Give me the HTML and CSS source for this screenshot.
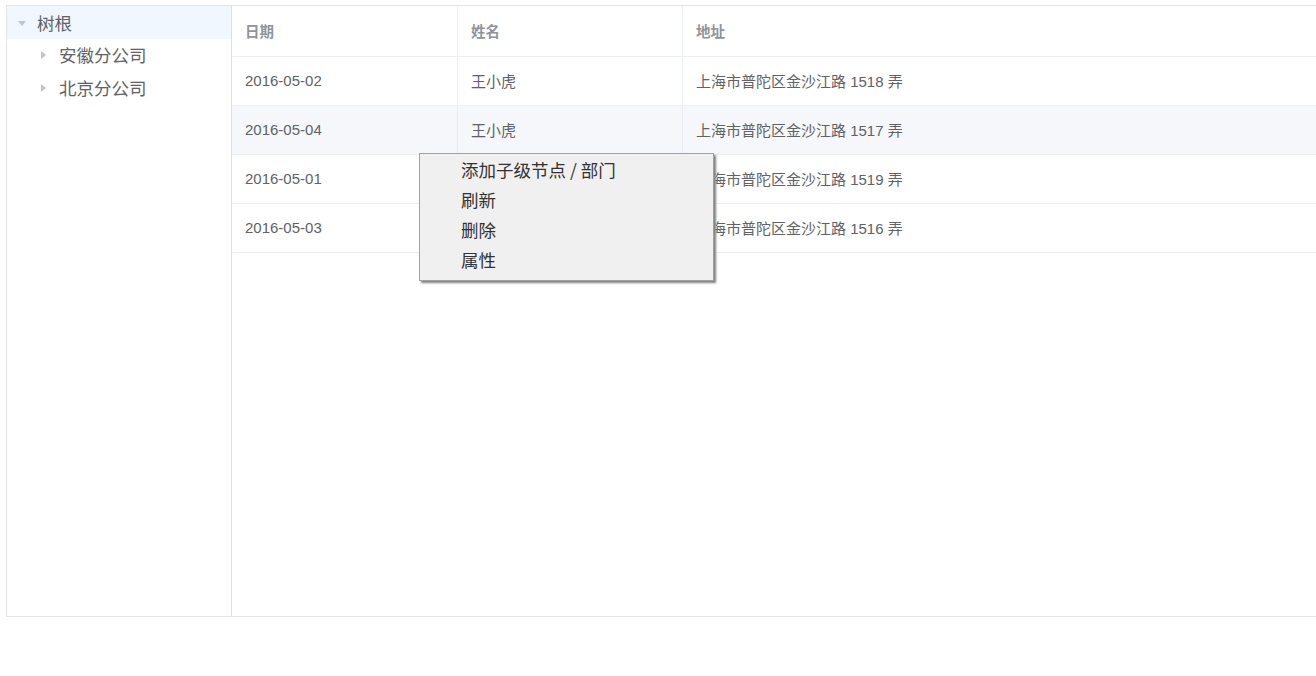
FILE: index.html
```html
<!DOCTYPE html>
<html lang="zh-CN">

<head>
    <meta charset="UTF-8">
    <title>部门管理</title>
    <link rel="stylesheet" href="styles.css">
</head>

<body>
    <div class="layout">
        <!-- left: department tree -->
        <div class="tree">
            <div class="tree-node is-current">
                <span class="caret caret-down"></span>
                <span class="tree-label">树根</span>
            </div>
            <div class="tree-node child">
                <span class="caret caret-right"></span>
                <span class="tree-label">安徽分公司</span>
            </div>
            <div class="tree-node child">
                <span class="caret caret-right"></span>
                <span class="tree-label">北京分公司</span>
            </div>
        </div>

        <!-- right: staff table -->
        <div class="table-wrap">
            <table class="data-table">
                <thead>
                    <tr>
                        <th class="col-date">日期</th>
                        <th class="col-name">姓名</th>
                        <th>地址</th>
                    </tr>
                </thead>
                <tbody>
                    <tr>
                        <td>2016-05-02</td>
                        <td>王小虎</td>
                        <td>上海市普陀区金沙江路 1518 弄</td>
                    </tr>
                    <tr class="hover-row">
                        <td>2016-05-04</td>
                        <td>王小虎</td>
                        <td>上海市普陀区金沙江路 1517 弄</td>
                    </tr>
                    <tr>
                        <td>2016-05-01</td>
                        <td>王小虎</td>
                        <td>上海市普陀区金沙江路 1519 弄</td>
                    </tr>
                    <tr>
                        <td>2016-05-03</td>
                        <td>王小虎</td>
                        <td>上海市普陀区金沙江路 1516 弄</td>
                    </tr>
                </tbody>
            </table>
        </div>
    </div>

    <!-- right click menu -->
    <ul class="context-menu">
        <li>添加子级节点 / 部门</li>
        <li>刷新</li>
        <li>删除</li>
        <li>属性</li>
    </ul>
</body>

</html>
```

FILE: styles.css
```css
/* Reset */
html,
body {
    margin: 0;
    padding: 0;
    overflow: hidden;
    background: #fff;
}

body {
    font-family: "Liberation Sans", "Noto Sans CJK SC", sans-serif;
    color: #606266;
}

/* Outer frame */
.layout {
    display: flex;
    margin: 5px 0 0 6px;
    width: 1360px;
    height: 610px;
    border: 1px solid #e4e4e4;
}

/* Tree panel */
.tree {
    width: 224px;
    flex-shrink: 0;
    border-right: 1px solid #dcdfe6;
    font-family: "Noto Sans CJK SC", sans-serif;
}

.tree-node {
    display: flex;
    align-items: center;
    height: 33px;
    padding-left: 2px;
    font-size: 17.5px;
    color: #606266;
}

.tree-node.child {
    padding-left: 24px;
    margin-top: -1px;
    margin-bottom: 1px;
}

.tree-node.is-current {
    background-color: #f0f7ff;
}

.caret {
    width: 24px;
    height: 12px;
    position: relative;
    flex-shrink: 0;
}

.caret::after {
    content: "";
    position: absolute;
    left: 9px;
    top: 2px;
    border: 4px solid transparent;
}

.caret-down::after {
    top: 4px;
    border-top: 5px solid #c0c4cc;
    border-bottom: 0;
}

.caret-right::after {
    left: 10px;
    border-left: 5px solid #c0c4cc;
    border-right: 0;
}

.tree-label {
    margin-left: 4px;
    line-height: 1;
}

/* Table */
.table-wrap {
    flex: 1;
    background: #fff;
}

.data-table {
    border-collapse: collapse;
    width: 100%;
    font-size: 15px;
    table-layout: fixed;
}

.data-table th,
.data-table td {
    text-align: left;
    vertical-align: middle;
    padding: 0 0 2px 13px;
    border-bottom: 1px solid #ebeef5;
    border-right: 1px solid #ebeef5;
    white-space: nowrap;
}

.data-table th {
    height: 48px;
    color: #909399;
    font-weight: bold;
    font-family: "Noto Sans CJK SC", sans-serif;
    font-size: 14.5px;
}

.data-table td {
    height: 46px;
}

.col-date {
    width: 212px;
}

.col-name {
    width: 211px;
}

.hover-row td {
    background-color: #f5f7fa;
}

/* Context menu */
.context-menu {
    position: absolute;
    left: 419px;
    top: 153px;
    width: 293px;
    margin: 0;
    padding: 1px 0 5px;
    list-style: none;
    background: #f0f0f0;
    border: 1px solid #a0a0a0;
    box-shadow: 2px 2px 2px #808080;
    font-family: "Noto Sans CJK SC", sans-serif;
    font-size: 17.5px;
    color: #333;
}

.context-menu li {
    height: 30px;
    line-height: 30px;
    padding-left: 41px;
}
```
